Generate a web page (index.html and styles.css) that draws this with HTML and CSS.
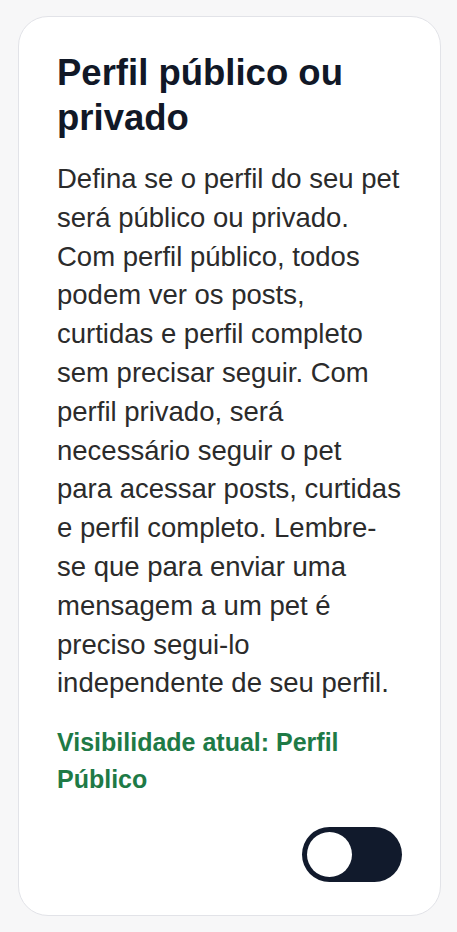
FILE: index.html
```html
<!DOCTYPE html>
<html lang="pt-BR">
<head>
<meta charset="UTF-8">
<meta name="viewport" content="width=device-width, initial-scale=1.0">
<title>Privacidade do perfil</title>
<link rel="stylesheet" href="styles.css">
</head>
<body>
  <div class="card">
    <h2>Perfil público ou privado</h2>
    <p class="desc">Defina se o perfil do seu pet será público ou privado. Com perfil público, todos podem ver os posts, curtidas e perfil completo sem precisar seguir. Com perfil privado, será necessário seguir o pet para&nbsp;acessar posts, curtidas e perfil completo. Lembre-se que para enviar uma mensagem a um pet é preciso segui-lo independente de seu perfil.</p>
    <p class="status">Visibilidade atual: Perfil Público</p>
    <div class="toggle-row">
      <button class="toggle" aria-label="Alternar visibilidade"><span class="knob"></span></button>
    </div>
  </div>
</body>
</html>
```

FILE: styles.css
```css
body {
  margin: 0;
  padding: 16px 16px 16px 18px;
  background-color: #f7f7f8;
  font-family: 'Liberation Sans', Arial, sans-serif;
}
.card {
  background-color: #fff;
  border: 1.5px solid #e2e3e8;
  border-radius: 30px;
  padding: 33px 36px 0 38px;
  height: 900px;
  box-sizing: border-box;
}
h2 {
  margin: 0;
  font-size: 36.5px;
  line-height: 45px;
  font-weight: 700;
  color: #111827;
}
.desc {
  margin: 20px 0 0;
  font-size: 27.5px;
  line-height: 38.8px;
  color: #2b2b2b;
}
.status {
  margin: 21px 0 0;
  font-size: 25px;
  line-height: 37px;
  font-weight: 700;
  color: #1e7a46;
}
.toggle-row {
  display: flex;
  justify-content: flex-end;
  margin: 29px 2px 0 0;
}
.toggle {
  width: 100px;
  height: 55px;
  border: none;
  border-radius: 28px;
  background-color: #111a2c;
  padding: 5px;
  display: flex;
  align-items: center;
  cursor: pointer;
}
.knob {
  width: 45px;
  height: 45px;
  border-radius: 50%;
  background-color: #fff;
}
```
